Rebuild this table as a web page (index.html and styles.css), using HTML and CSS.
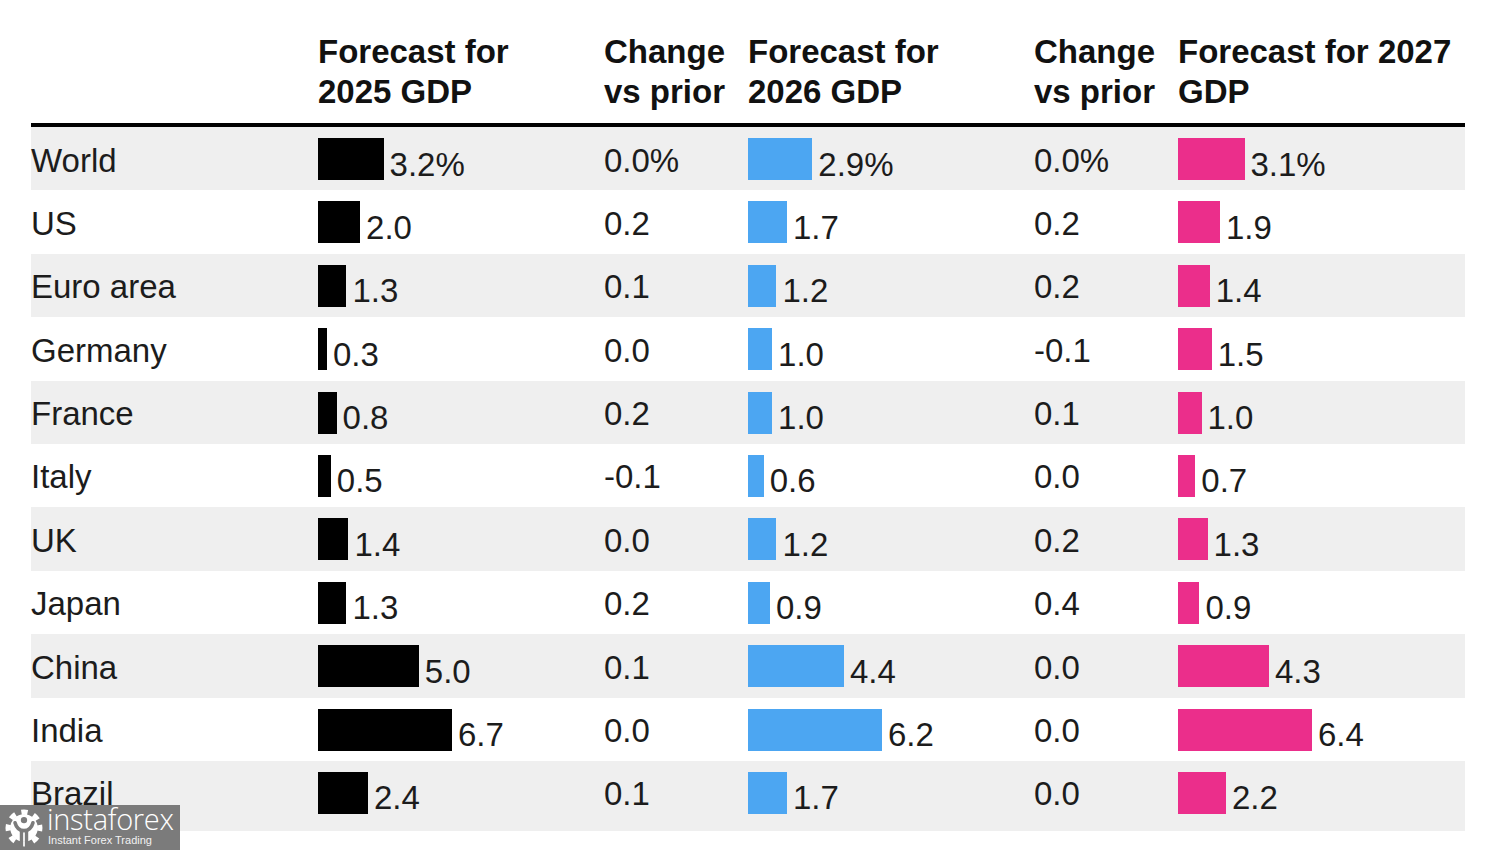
FILE: index.html
```html
<!DOCTYPE html>
<html lang="en">
<head>
<meta charset="utf-8">
<title>GDP forecasts</title>
<link rel="stylesheet" href="styles.css">
</head>
<body>
<div class="page">
  <div class="table">
    <div class="head">
      <div class="hcell"></div>
      <div class="hcell">Forecast for<br>2025 GDP</div>
      <div class="hcell">Change<br>vs prior</div>
      <div class="hcell">Forecast for<br>2026 GDP</div>
      <div class="hcell">Change<br>vs prior</div>
      <div class="hcell">Forecast for 2027<br>GDP</div>
    </div>

    <div class="row alt">
      <div class="name">World</div>
      <div class="barcell"><span class="bar black" style="width:65.6px"></span><span class="val">3.2%</span></div>
      <div class="chg">0.0%</div>
      <div class="barcell"><span class="bar blue" style="width:64.3px"></span><span class="val">2.9%</span></div>
      <div class="chg">0.0%</div>
      <div class="barcell"><span class="bar pink" style="width:66.5px"></span><span class="val">3.1%</span></div>
    </div>

    <div class="row">
      <div class="name">US</div>
      <div class="barcell"><span class="bar black" style="width:42.1px"></span><span class="val">2.0</span></div>
      <div class="chg">0.2</div>
      <div class="barcell"><span class="bar blue" style="width:38.9px"></span><span class="val">1.7</span></div>
      <div class="chg">0.2</div>
      <div class="barcell"><span class="bar pink" style="width:41.9px"></span><span class="val">1.9</span></div>
    </div>

    <div class="row alt">
      <div class="name">Euro area</div>
      <div class="barcell"><span class="bar black" style="width:28.4px"></span><span class="val">1.3</span></div>
      <div class="chg">0.1</div>
      <div class="barcell"><span class="bar blue" style="width:28.4px"></span><span class="val">1.2</span></div>
      <div class="chg">0.2</div>
      <div class="barcell"><span class="bar pink" style="width:31.7px"></span><span class="val">1.4</span></div>
    </div>

    <div class="row">
      <div class="name">Germany</div>
      <div class="barcell"><span class="bar black" style="width:8.9px"></span><span class="val">0.3</span></div>
      <div class="chg">0.0</div>
      <div class="barcell"><span class="bar blue" style="width:24.1px"></span><span class="val">1.0</span></div>
      <div class="chg">-0.1</div>
      <div class="barcell"><span class="bar pink" style="width:33.7px"></span><span class="val">1.5</span></div>
    </div>

    <div class="row alt">
      <div class="name">France</div>
      <div class="barcell"><span class="bar black" style="width:18.6px"></span><span class="val">0.8</span></div>
      <div class="chg">0.2</div>
      <div class="barcell"><span class="bar blue" style="width:24.1px"></span><span class="val">1.0</span></div>
      <div class="chg">0.1</div>
      <div class="barcell"><span class="bar pink" style="width:23.5px"></span><span class="val">1.0</span></div>
    </div>

    <div class="row">
      <div class="name">Italy</div>
      <div class="barcell"><span class="bar black" style="width:12.8px"></span><span class="val">0.5</span></div>
      <div class="chg">-0.1</div>
      <div class="barcell"><span class="bar blue" style="width:15.7px"></span><span class="val">0.6</span></div>
      <div class="chg">0.0</div>
      <div class="barcell"><span class="bar pink" style="width:17.3px"></span><span class="val">0.7</span></div>
    </div>

    <div class="row alt">
      <div class="name">UK</div>
      <div class="barcell"><span class="bar black" style="width:30.4px"></span><span class="val">1.4</span></div>
      <div class="chg">0.0</div>
      <div class="barcell"><span class="bar blue" style="width:28.4px"></span><span class="val">1.2</span></div>
      <div class="chg">0.2</div>
      <div class="barcell"><span class="bar pink" style="width:29.6px"></span><span class="val">1.3</span></div>
    </div>

    <div class="row">
      <div class="name">Japan</div>
      <div class="barcell"><span class="bar black" style="width:28.4px"></span><span class="val">1.3</span></div>
      <div class="chg">0.2</div>
      <div class="barcell"><span class="bar blue" style="width:22px"></span><span class="val">0.9</span></div>
      <div class="chg">0.4</div>
      <div class="barcell"><span class="bar pink" style="width:21.4px"></span><span class="val">0.9</span></div>
    </div>

    <div class="row alt">
      <div class="name">China</div>
      <div class="barcell"><span class="bar black" style="width:100.8px"></span><span class="val">5.0</span></div>
      <div class="chg">0.1</div>
      <div class="barcell"><span class="bar blue" style="width:96px"></span><span class="val">4.4</span></div>
      <div class="chg">0.0</div>
      <div class="barcell"><span class="bar pink" style="width:91px"></span><span class="val">4.3</span></div>
    </div>

    <div class="row">
      <div class="name">India</div>
      <div class="barcell"><span class="bar black" style="width:134px"></span><span class="val">6.7</span></div>
      <div class="chg">0.0</div>
      <div class="barcell"><span class="bar blue" style="width:134px"></span><span class="val">6.2</span></div>
      <div class="chg">0.0</div>
      <div class="barcell"><span class="bar pink" style="width:134px"></span><span class="val">6.4</span></div>
    </div>

    <div class="row alt last">
      <div class="name">Brazil</div>
      <div class="barcell"><span class="bar black" style="width:49.9px"></span><span class="val">2.4</span></div>
      <div class="chg">0.1</div>
      <div class="barcell"><span class="bar blue" style="width:38.9px"></span><span class="val">1.7</span></div>
      <div class="chg">0.0</div>
      <div class="barcell"><span class="bar pink" style="width:48px"></span><span class="val">2.2</span></div>
    </div>
  </div>

  <div class="logo">
    <svg class="logo-icon" width="38" height="38" viewBox="0 0 36 36" aria-hidden="true">
      <circle cx="18" cy="18" r="13" fill="#fff"/>
      <circle cx="18" cy="18" r="15" fill="none" stroke="#fff" stroke-width="5" stroke-dasharray="5.8 5.98" transform="rotate(-11 18 18)"/>
      <circle cx="18" cy="10.5" r="3" fill="#7b7b7b"/>
      <path d="M9.5 13 Q11.5 20.5 18 20.5 Q24.5 20.5 26.5 13" fill="none" stroke="#7b7b7b" stroke-width="3.4" stroke-linecap="round"/>
      <path d="M15.6 20 V36 M20.4 20 V36" stroke="#7b7b7b" stroke-width="3.2"/>
    </svg>
    <div class="logo-text">
      <div class="logo-name">instaforex</div>
      <div class="logo-tag">Instant Forex Trading</div>
    </div>
  </div>
</div>
</body>
</html>
```

FILE: styles.css
```css
html, body {
  margin: 0;
  padding: 0;
  background: #ffffff;
}

.page {
  position: relative;
  width: 1500px;
  height: 850px;
  overflow: hidden;
  padding: 32px 0 0 31px;
  box-sizing: border-box;
  font-family: "Liberation Sans", Arial, sans-serif;
  color: #1c1c1c;
}

.table {
  width: 1434px;
}

.head,
.row {
  display: grid;
  grid-template-columns: 287px 286px 144px 286px 144px 287px;
}

.head {
  padding-bottom: 11px;
  border-bottom: 4px solid #000;
}

.hcell {
  font-size: 33px;
  font-weight: 700;
  line-height: 40px;
  color: #111;
  white-space: nowrap;
}

.row {
  height: 63.4px;
  background: #ffffff;
}

.row.alt {
  background: #efefef;
}

.row.last {
  height: 70px;
}

.name,
.chg {
  font-size: 33px;
  line-height: 40px;
  padding-top: 13.5px;
  white-space: nowrap;
}

.barcell {
  display: flex;
  align-items: flex-start;
}

.bar {
  display: block;
  height: 42px;
  margin-top: 11px;
  flex: none;
}

.bar.black { background: #000000; }
.bar.blue { background: #4ca6f2; }
.bar.pink { background: #eb2e8b; }

.val {
  font-size: 33px;
  line-height: 40px;
  padding-top: 17.5px;
  margin-left: 6px;
  white-space: nowrap;
}

.logo {
  position: absolute;
  left: 0;
  top: 805px;
  width: 180px;
  height: 45px;
  background: #7b7b7b;
  display: flex;
  align-items: flex-start;
  color: #fff;
}

.logo-icon {
  margin: 4px 0 0 5px;
  flex: none;
}

.logo-text {
  margin-left: 4px;
  display: flex;
  flex-direction: column;
}

.logo-name {
  font-family: "Open Sans", "Liberation Sans", sans-serif;
  font-weight: 300;
  font-size: 29px;
  line-height: 30px;
  margin-top: -1px;
  letter-spacing: -0.3px;
}

.logo-tag {
  font-family: "Liberation Sans", Arial, sans-serif;
  font-size: 11px;
  line-height: 12px;
  margin-left: 1px;
  color: #f2f2f2;
}
```
